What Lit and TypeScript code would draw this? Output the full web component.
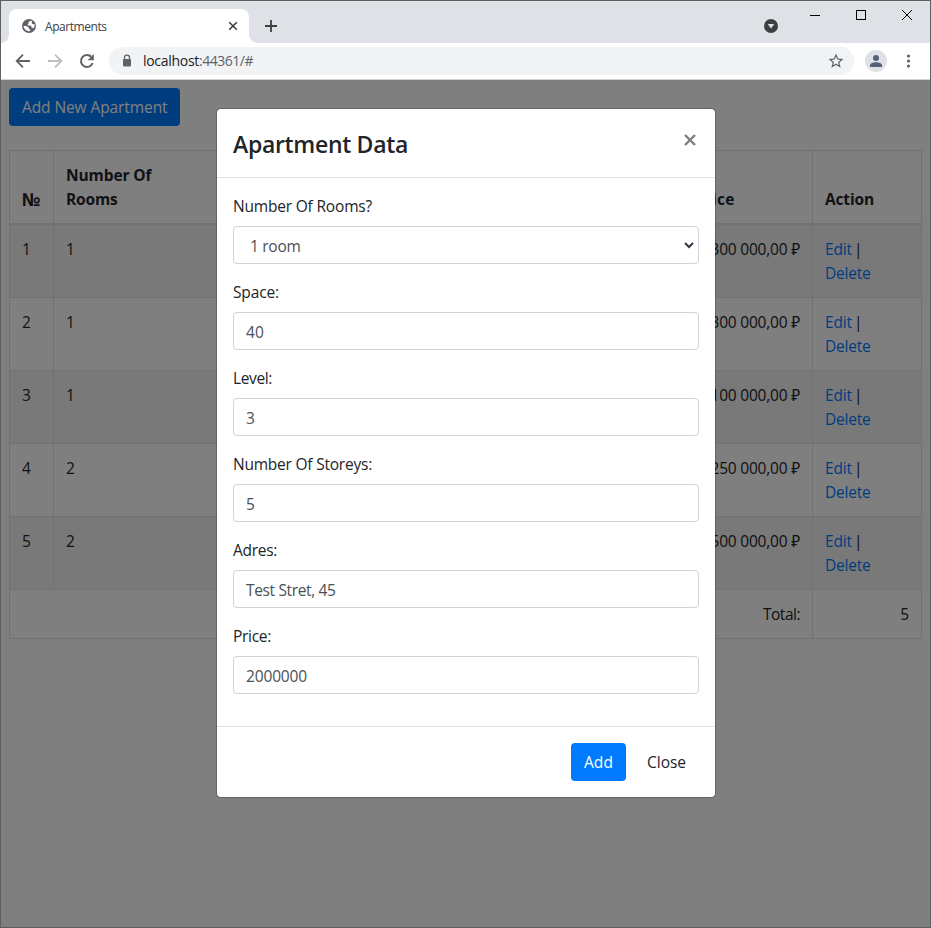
import { LitElement, html, css } from "lit";
import { customElement, property } from "lit/decorators.js";

interface Apartment {
  id: number;
  rooms: number;
  space: number;
  level: number;
  storeys: number;
  adres: string;
  price: string;
}

const APARTMENTS: Apartment[] = [
  { id: 1, rooms: 1, space: 36, level: 2, storeys: 5, adres: "Lenina, 10", price: "2 300 000,00" },
  { id: 2, rooms: 1, space: 38, level: 4, storeys: 9, adres: "Mira, 21", price: "2 300 000,00" },
  { id: 3, rooms: 1, space: 33, level: 1, storeys: 5, adres: "Sadovaya, 3", price: "2 100 000,00" },
  { id: 4, rooms: 2, space: 52, level: 6, storeys: 9, adres: "Mira, 40", price: "3 250 000,00" },
  { id: 5, rooms: 2, space: 55, level: 3, storeys: 5, adres: "Lenina, 7", price: "3 500 000,00" },
];

const FIELDS = [
  { label: "Space:", value: "40", labelWidth: 46, valueWidth: 18 },
  { label: "Level:", value: "3", labelWidth: 39, valueWidth: 9 },
  { label: "Number Of Storeys:", value: "5", labelWidth: 139, valueWidth: 9 },
  { label: "Adres:", value: "Test Stret, 45", labelWidth: 44, valueWidth: 89.5 },
  { label: "Price:", value: "2000000", labelWidth: 38, valueWidth: 61 },
];

@customElement("fit-text")
class FitText extends LitElement {
  @property() text = "";
  @property({ type: Number }) w = 0;
  static styles = css`
    :host { display: inline-block; white-space: pre; }
  `;
  render() {
    return html`${this.text}`;
  }
  firstUpdated() {
    if (!this.w) return;
    const natural = this.getBoundingClientRect().width;
    this.style.letterSpacing = (this.w - natural) / this.text.length + "px";
  }
}

const t = (text: string, w: number) => html`<fit-text .text=${text} .w=${w}></fit-text>`;

@customElement("browser-chrome")
class BrowserChrome extends LitElement {
  static styles = css`
    :host { display: block; flex: none; }
    svg { display: block; flex: none; }
    .strip { height: 42px; background: #dee1e6; display: flex; }
    .tab {
      position: relative; width: 240px; height: 34px; margin: 8px 0 0 8px; background: #fff;
      border-radius: 8px 8px 0 0; display: flex; align-items: center; box-sizing: border-box;
      padding: 0 9px 0 13px; font-size: 12px; color: #3c4043;
    }
    .tab::before, .tab::after {
      content: ""; position: absolute; bottom: 0; width: 8px; height: 8px;
    }
    .tab::before { left: -8px; background: radial-gradient(circle at 0 0, transparent 7.5px, #fff 8px); }
    .tab::after { right: -8px; background: radial-gradient(circle at 100% 0, transparent 7.5px, #fff 8px); }
    .title { margin-left: 9px; flex: 1; }
    .plus { margin: 19px 0 0 16px; }
    .spacer { flex: 1; }
    .drop { margin: 18px 32px 0 0; }
    .min { margin: 14px 36px 0 0; }
    .max { margin: 9px 36px 0 0; }
    .close { margin: 9px 18px 0 0; }
    .bar {
      height: 36px; background: #fff; border-bottom: 1px solid #d3d4d6; display: flex; align-items: center;
    }
    .back { margin-left: 14px; }
    .fwd { margin-left: 16px; }
    .reload { margin-left: 16px; }
    .url {
      margin-left: 14px; width: 745px; height: 28px; border-radius: 14px; background: #f1f3f4;
      display: flex; align-items: center; padding: 0 9px 0 12px; box-sizing: border-box; font-size: 14px;
    }
    .addr { flex: 1; margin-left: 10px; color: #202124; display: flex; line-height: 20px; }
    .dim { color: #5f6368; }
    .avatar { margin-left: 11px; }
    .dots { margin-left: 13px; }
  `;
  render() {
    return html`
      <div class="strip">
        <div class="tab">
          <svg width="14" height="14" viewBox="0 0 14 14">
            <circle cx="7" cy="7" r="7" fill="#5f6368" />
            <path d="M8.600 1.700 6.600 3v1.200L5.800 5.200v1.200h2.700l1 1.100v1.200h1.300l.9.9a5.500 5.500 0 0 0 .8-4.600l-1.700.3-1-.9V3.200l.7-.8z" fill="#fff" />
            <path d="M1.500 7h2.800l2.400 1.600v1.200l1.500.7v1.600a5.500 5.500 0 0 1-6.700-5.100z" fill="#fff" />
          </svg>
          <span class="title">${t("Apartments", 61.5)}</span>
          <svg width="14" height="14" viewBox="0 0 14 14" stroke="#3c4043" stroke-width="1.600"><path d="M3.200 3.200 10.800 10.800M10.800 3.200 3.200 10.800" /></svg>
        </div>
        <svg class="plus" width="12" height="12" viewBox="0 0 12 12" stroke="#3c4043" stroke-width="1.800"><path d="M6 0v12M0 6h12" /></svg>
        <div class="spacer"></div>
        <svg class="drop" width="14" height="14" viewBox="0 0 14 14"><circle cx="7" cy="7" r="7" fill="#3c4043" /><path d="M3.700 5h6.600L7 9.600z" fill="#dee1e6" /></svg>
        <svg class="min" width="10" height="1"><rect width="10" height="1" fill="#000" /></svg>
        <svg class="max" width="10" height="10" fill="none" stroke="#000"><rect x=".5" y=".5" width="9" height="9" /></svg>
        <svg class="close" width="10" height="10" stroke="#000"><path d="M0 0 10 10M10 0 0 10" /></svg>
      </div>
      <div class="bar">
        <svg class="back" width="16" height="16" viewBox="0 0 16 16" fill="none" stroke="#5f6368" stroke-width="1.800"><path d="M15 8H2.500M8 1.700 1.700 8 8 14.300" /></svg>
        <svg class="fwd" width="16" height="16" viewBox="0 0 16 16" fill="none" stroke="#bbbdbf" stroke-width="1.800"><path d="M1 8h12.500M8 1.700 14.300 8 8 14.300" /></svg>
        <svg class="reload" width="16" height="16" viewBox="0 0 16 16"><path d="M13.600 10A6 6 0 1 1 12.300 3.800" fill="none" stroke="#5f6368" stroke-width="2" /><path d="M14.800 1v6.200H8.600z" fill="#5f6368" /></svg>
        <div class="url">
          <svg width="12" height="14" viewBox="0 0 12 14"><path d="M3.500 6V3.600a2.500 2.500 0 0 1 5 0V6" fill="none" stroke="#5f6368" stroke-width="1.300" /><rect x="2" y="5" width="8" height="7.500" rx="1" fill="#5f6368" /></svg>
          <span class="addr">${t("localhost", 56)}<span class="dim">${t(":44361/#", 54)}</span></span>
          <svg width="18" height="18" viewBox="0 0 24 24" fill="#5f6368"><path d="M22 9.240l-7.190-.620L12 2 9.190 8.630 2 9.240l5.460 4.730L5.820 21 12 17.270 18.180 21l-1.630-7.030L22 9.240zM12 15.400l-3.760 2.270 1-4.280-3.320-2.880 4.380-.380L12 6.100l1.710 4.040 4.380.380-3.320 2.880 1 4.280L12 15.400z" /></svg>
        </div>
        <svg class="avatar" width="22" height="22" viewBox="0 0 22 22"><circle cx="11" cy="11" r="11" fill="#dee1e6" /><circle cx="11" cy="8" r="3" fill="#546078" /><path d="M5 17v-1.500c0-2 3-3.200 6-3.200s6 1.200 6 3.200V17z" fill="#546078" /></svg>
        <svg class="dots" width="18" height="16" viewBox="0 0 18 16" fill="#5f6368"><circle cx="8.500" cy="3" r="1.600" /><circle cx="8.500" cy="8" r="1.600" /><circle cx="8.500" cy="13" r="1.600" /></svg>
      </div>
    `;
  }
}

@customElement("apartment-table")
class ApartmentTable extends LitElement {
  static styles = css`
    :host { display: block; }
    table { width: 913px; table-layout: fixed; border-collapse: collapse; border: 1px solid #dee2e6; }
    th, td { padding: 12px; border: 1px solid #dee2e6; vertical-align: top; text-align: left; line-height: 24px; }
    th { vertical-align: bottom; border-bottom-width: 2px; font-weight: 700; }
    tbody tr:nth-child(odd) { background: rgba(0, 0, 0, 0.05); }
    .c-id { width: 44px; }
    .c-rooms { width: 170px; }
    .c-price { width: 130px; }
    .c-action { width: 109px; }
    .numero { font-size: 18px; }
    .num { text-align: right; white-space: nowrap; }
    .link { color: #007bff; text-decoration: none; }
    .sep { margin-left: 2px; }
  `;
  render() {
    return html`
      <table>
        <colgroup>
          <col class="c-id" /><col class="c-rooms" /><col /><col /><col /><col /><col class="c-price" /><col class="c-action" />
        </colgroup>
        <thead>
          <tr>
            <th class="numero">${t("№", 20)}</th>
            <th>${t("Number Of", 85.5)}<br />${t("Rooms", 51.5)}</th>
            <th>Space</th><th>Level</th><th>Storeys</th><th>Adres</th>
            <th>${t("Price", 39.5)}</th>
            <th>${t("Action", 49)}</th>
          </tr>
        </thead>
        <tbody>
          ${APARTMENTS.map(
            (a) => html`<tr>
              <td>${a.id}</td><td>${a.rooms}</td><td>${a.space}</td><td>${a.level}</td><td>${a.storeys}</td><td>${a.adres}</td>
              <td class="num">${t(a.price + " ₽", 102)}</td>
              <td><a class="link">${t("Edit", 27)}</a><span class="sep">|</span><br /><a class="link">${t("Delete", 45.5)}</a></td>
            </tr>`
          )}
        </tbody>
        <tfoot>
          <tr><td class="num" colspan="7">${t("Total:", 37)}</td><td class="num">${APARTMENTS.length}</td></tr>
        </tfoot>
      </table>
    `;
  }
}

@customElement("apartment-dialog")
class ApartmentDialog extends LitElement {
  static styles = css`
    :host {
      display: flex; flex-direction: column; width: 500px; height: 690px; box-sizing: border-box; background: #fff;
      background-clip: padding-box; border: 1px solid rgba(0, 0, 0, 0.2); border-radius: 5px;
    }
    .head { display: flex; justify-content: space-between; padding: 16px; height: 69px; box-sizing: border-box; border-bottom: 1px solid #dee2e6; }
    .title { margin: 0; font-size: 23px; line-height: 38px; font-weight: 600; color: #212529; }
    .x { margin: 9px 3px 0 0; }
    .body { flex: 1; padding: 16px; }
    .group { margin-bottom: 16px; }
    .label { display: block; height: 24px; line-height: 25px; margin-bottom: 8px; color: #212529; }
    .input {
      height: 38px; box-sizing: border-box; border: 1px solid #ced4da; border-radius: 4px; padding: 2px 12px 0;
      display: flex; align-items: center; justify-content: space-between; color: #495057; line-height: 34px;
    }
    .select { padding: 2px 4px 0 16px; }
    .foot { display: flex; justify-content: flex-end; align-items: center; gap: 8px; height: 71px; box-sizing: border-box; padding: 0 16px; border-top: 1px solid #dee2e6; }
    .btn { height: 38px; line-height: 39px; padding: 0 13px; border-radius: 4px; color: #212529; }
    .primary { background: #007bff; color: #fff; }
  `;
  render() {
    return html`
      <div class="head">
        <h4 class="title">${t("Apartment Data", 175)}</h4>
        <svg class="x" width="12" height="12" viewBox="0 0 12 12" stroke="#7f7f7f" stroke-width="2.400"><path d="M1 1 11 11M11 1 1 11" /></svg>
      </div>
      <div class="body">
        <div class="group">
          <span class="label">${t("Number Of Rooms?", 139)}</span>
          <div class="input select">${t("1 room", 50.5)}
            <svg width="10" height="8" viewBox="0 0 10 8" fill="none" stroke="#343a40" stroke-width="2"><path d="M1 1 5 5 9 1" /></svg>
          </div>
        </div>
        ${FIELDS.map(
          (f) => html`<div class="group">
            <span class="label">${t(f.label, f.labelWidth)}</span>
            <div class="input">${t(f.value, f.valueWidth)}</div>
          </div>`
        )}
      </div>
      <div class="foot">
        <span class="btn primary">${t("Add", 29)}</span>
        <span class="btn">${t("Close", 39)}</span>
      </div>
    `;
  }
}

@customElement("app-root")
class AppRoot extends LitElement {
  static styles = css`
    :host {
      display: flex; flex-direction: column; width: 931px; height: 928px; box-sizing: border-box;
      border: 1px solid #5f5f5f; background: #fff; overflow: hidden;
      font-family: "Open Sans", "Noto Sans", sans-serif; font-size: 15.500px; color: #212529;
    }
    .page { position: relative; flex: 1; padding: 8px; overflow: hidden; }
    .add {
      display: block; width: 171px; height: 38px; line-height: 39px; box-sizing: border-box; padding: 0 13px;
      border-radius: 4px; background: #007bff; color: #fff; margin-bottom: 24px;
    }
    .backdrop { position: absolute; inset: 0; background: rgba(0, 0, 0, 0.5); display: flex; justify-content: center; align-items: flex-start; padding: 28px 0 0 1px; }
  `;
  render() {
    return html`
      <browser-chrome></browser-chrome>
      <div class="page">
        <span class="add">${t("Add New Apartment", 145.5)}</span>
        <apartment-table></apartment-table>
        <div class="backdrop"><apartment-dialog></apartment-dialog></div>
      </div>
    `;
  }
}
